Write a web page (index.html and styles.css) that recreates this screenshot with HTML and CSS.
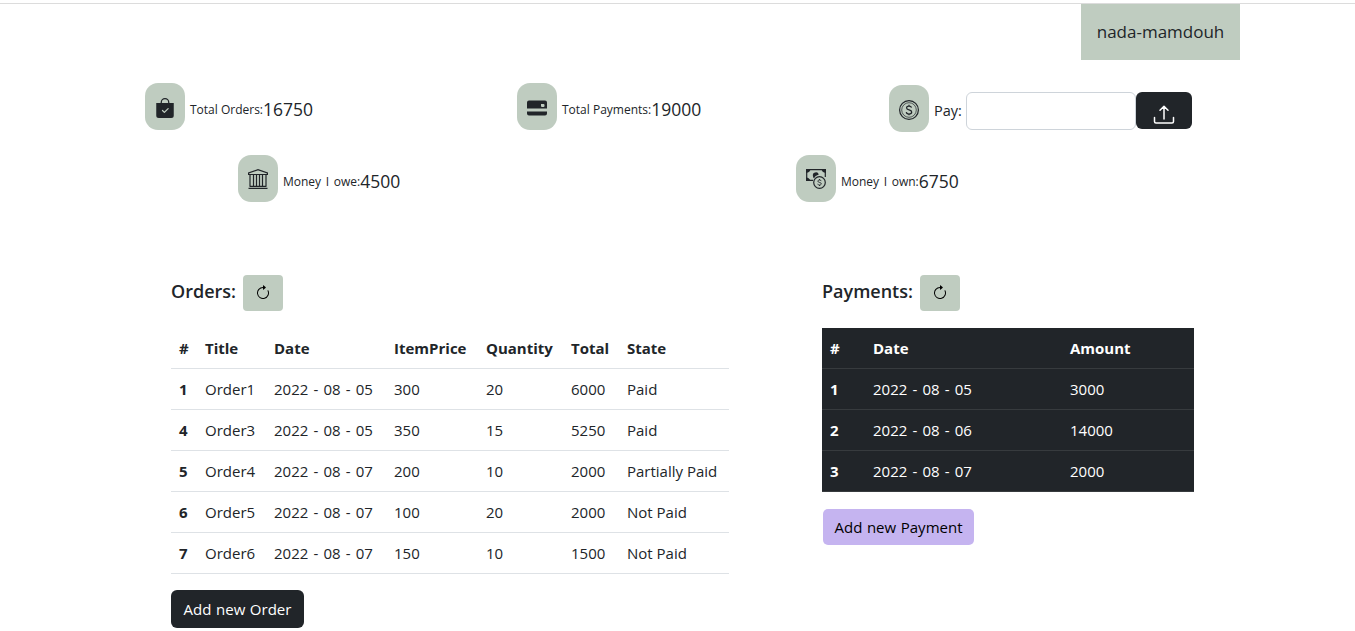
FILE: index.html
```html
<!DOCTYPE html>
<html lang="en">
<head>
<meta charset="utf-8">
<title>Orders and payments</title>
<link rel="stylesheet" href="styles.css">
</head>
<body>
<header class="topbar"><div class="user"><span class="user-name">nada-mamdouh</span></div></header>

<section class="stats stats-three">
  <div class="stat">
    <span class="badge"><svg width="20" height="20" viewBox="0 0 16 16" fill="currentColor"><path fill-rule="evenodd" d="M10.500 3.500a2.500 2.500 0 0 0-5 0V4h5v-.5zm1 0V4H15v10a2 2 0 0 1-2 2H3a2 2 0 0 1-2-2V4h3.500v-.5a3.500 3.500 0 1 1 7 0zm-.646 5.354a.5.5 0 0 0-.708-.708L7.500 10.793 6.354 9.646a.5.5 0 1 0-.708.708l1.500 1.500a.5.5 0 0 0 .708 0l3-3z"/></svg></span>
    <span class="label">Total Orders:</span><span class="amount">16750</span>
  </div>
  <div class="stat">
    <span class="badge"><svg width="20" height="20" viewBox="0 0 20 20"><path fill="currentColor" fill-rule="evenodd" d="M2 2.500H18Q20 2.500 20 4.500V10.500H0V4.500Q0 2.500 2 2.500ZM14 6V8Q14 9 15 9H16.500Q17.500 9 17.500 8V7Q17.500 6 16.500 6ZM0 13.500H20V15.500Q20 17.500 18 17.500H2Q0 17.500 0 15.500Z"/></svg></span>
    <span class="label">Total Payments:</span><span class="amount">19000</span>
  </div>
  <form class="stat stat-pay">
    <span class="badge"><svg width="20" height="20" viewBox="0 0 20 20" fill="none" stroke="currentColor"><circle cx="10" cy="10" r="9.400" stroke-width="1.200"/><circle cx="10" cy="10" r="7.300" stroke-width=".7"/><path stroke-width="1.250" d="M12.500 7.700C12.300 6.600 11.300 6 10 6 8.600 6 7.600 6.800 7.600 7.900 7.600 10.500 12.700 9.300 12.700 12 12.700 13.200 11.600 14 10 14 8.500 14 7.400 13.300 7.300 12.100M10 4.800V6M10 14V15.200"/></svg></span>
    <label class="pay-label" for="pay">Pay:</label>
    <input class="pay-input" id="pay" type="text">
    <button class="pay-button" type="button" aria-label="Send payment"><svg width="22" height="22" viewBox="0 0 22 22" fill="none" stroke="currentColor" stroke-width="1.500" stroke-linecap="round" stroke-linejoin="round"><path d="M1.500 13.500V17.500Q1.500 19 3 19H19Q20.500 19 20.500 17.500V13.500M11 15V2.500M7 6.300 11 2.300 15 6.300"/></svg></button>
  </form>
</section>

<section class="stats stats-two">
  <div class="stat">
    <span class="badge badge-raised"><svg width="20" height="20" viewBox="0 0 20 20" fill="none" stroke="currentColor" stroke-width="1.200"><path d="M.6 5.500V4L10 .7 19.400 4V5.500ZM2 5.500V17M5.500 5.500V17M8.500 5.500V17M11.500 5.500V17M14.500 5.500V17M18 5.500V17M1.500 17.300H18.500M.5 19.300H19.500"/></svg></span>
    <span class="label label-wide">Money I owe:</span><span class="amount">4500</span>
  </div>
  <div class="stat">
    <span class="badge badge-raised"><svg width="20" height="20" viewBox="0 0 20 20"><path fill="none" stroke="currentColor" stroke-width="1.200" d="M7 11.400H.7V.7H19.300V8"/><path fill="currentColor" d="M0 0H4.500Q4.300 3 1 3.800H0ZM20 0H15.500Q15.700 3 19 3.800H20ZM0 12V8.500Q3.800 8.800 4.300 12ZM7 7.200A3 3 0 0 1 12.800 5.500Q9 6.500 8 9.200 7 8.500 7 7.200Z"/><circle cx="13.500" cy="13.500" r="5.800" fill="none" stroke="currentColor" stroke-width="1.200"/><path fill="none" stroke="currentColor" stroke-width=".9" d="M15.200 12.100C15 11.300 14.400 11 13.500 11 12.600 11 11.900 11.500 11.900 12.200 11.900 13.900 15.300 13 15.300 14.800 15.300 15.600 14.500 16 13.500 16 12.500 16 11.800 15.600 11.700 14.800M13.500 10V11M13.500 16V17"/></svg></span>
    <span class="label label-wide">Money I own:</span><span class="amount">6750</span>
  </div>
</section>

<main class="panels">
  <section class="orders">
    <div class="panel-head"><h2 class="panel-title title-orders">Orders:</h2><button class="refresh" type="button" aria-label="Refresh orders"><svg width="16" height="16" viewBox="0 0 16 16" fill="currentColor"><path fill-rule="evenodd" d="M8 3a5 5 0 1 0 4.546 2.914.5.5 0 0 1 .908-.417A6 6 0 1 1 8 2v1z"/><path d="M8 4.466V.534a.25.25 0 0 1 .41-.192l2.360 1.966c.12.1.12.284 0 .384L8.410 4.658A.25.25 0 0 1 8 4.466z"/></svg></button></div>
    <table class="table orders-table">
      <colgroup><col class="o-num"><col class="o-title"><col class="o-date"><col class="o-price"><col class="o-qty"><col class="o-total"><col class="o-state"></colgroup>
      <thead><tr><th>#</th><th>Title</th><th>Date</th><th>ItemPrice</th><th>Quantity</th><th>Total</th><th>State</th></tr></thead>
      <tbody>
        <tr><th>1</th><td>Order1</td><td class="date">2022 - 08 - 05</td><td>300</td><td>20</td><td>6000</td><td>Paid</td></tr>
        <tr><th>4</th><td>Order3</td><td class="date">2022 - 08 - 05</td><td>350</td><td>15</td><td>5250</td><td>Paid</td></tr>
        <tr><th>5</th><td>Order4</td><td class="date">2022 - 08 - 07</td><td>200</td><td>10</td><td>2000</td><td>Partially Paid</td></tr>
        <tr><th>6</th><td>Order5</td><td class="date">2022 - 08 - 07</td><td>100</td><td>20</td><td>2000</td><td>Not Paid</td></tr>
        <tr><th>7</th><td>Order6</td><td class="date">2022 - 08 - 07</td><td>150</td><td>10</td><td>1500</td><td>Not Paid</td></tr>
      </tbody>
    </table>
    <button class="button button-dark" type="button">Add new Order</button>
  </section>

  <section class="payments">
    <div class="panel-head"><h2 class="panel-title title-payments">Payments:</h2><button class="refresh" type="button" aria-label="Refresh payments"><svg width="16" height="16" viewBox="0 0 16 16" fill="currentColor"><path fill-rule="evenodd" d="M8 3a5 5 0 1 0 4.546 2.914.5.5 0 0 1 .908-.417A6 6 0 1 1 8 2v1z"/><path d="M8 4.466V.534a.25.25 0 0 1 .41-.192l2.360 1.966c.12.1.12.284 0 .384L8.410 4.658A.25.25 0 0 1 8 4.466z"/></svg></button></div>
    <table class="table table-dark">
      <colgroup><col class="p-num"><col class="p-date"><col class="p-amount"></colgroup>
      <thead><tr><th>#</th><th>Date</th><th>Amount</th></tr></thead>
      <tbody>
        <tr><th>1</th><td class="date">2022 - 08 - 05</td><td>3000</td></tr>
        <tr><th>2</th><td class="date">2022 - 08 - 06</td><td>14000</td></tr>
        <tr><th>3</th><td class="date">2022 - 08 - 07</td><td>2000</td></tr>
      </tbody>
    </table>
    <button class="button button-lilac" type="button">Add new Payment</button>
  </section>
</main>
</body>
</html>
```
FILE: styles.css
```css
* { box-sizing: border-box; }
body {
  margin: 0;
  padding-top: 3px;
  height: 631px;
  overflow: hidden;
  background: #fff;
  color: #212529;
  font: 15px/24px "Open Sans", "Noto Sans", sans-serif;
}
svg { display: block; flex: none; }
button { font: inherit; cursor: pointer; }

.topbar {
  display: flex;
  justify-content: flex-end;
  height: 57px;
  padding-right: 115px;
  border-top: 1px solid #dcdcdc;
}
.user {
  display: flex;
  align-items: center;
  justify-content: center;
  width: 159px;
  background: #bfccc0;
  font-size: 17px;
}

.stats { display: grid; height: 72px; }
.stats-three {
  grid-template-columns: 372px 372px 372px;
  margin-top: 23px;
  padding-left: 145px;
}
.stats-two { grid-template-columns: 558px 558px; padding-left: 238px; }
.stat { display: flex; align-items: flex-start; height: 49px; }
.badge {
  display: flex;
  align-items: center;
  justify-content: center;
  flex: none;
  width: 40px;
  height: 47px;
  margin-right: 5px;
  padding-top: 3px;
  border-radius: 13px;
  background: #bfccc0;
}
.badge-raised { padding-top: 1px; }
.label { margin-top: 15px; font-size: 12px; white-space: nowrap; }
.label-wide { word-spacing: 1.5px; }
.amount { margin-top: 14px; font-size: 17.5px; }
.stat-pay { padding-top: 2px; }
.pay-label { width: 32px; margin-top: 14px; font-size: 14.5px; }
.pay-input {
  width: 170px;
  height: 38px;
  margin-top: 7px;
  border: 1px solid #ced4da;
  border-radius: 6px;
}
.pay-button {
  display: flex;
  justify-content: center;
  width: 56px;
  height: 37px;
  margin-top: 7px;
  padding: 12px 0 0;
  border: 0;
  border-radius: 6px;
  background: #212529;
  color: #fff;
}

.panels {
  display: grid;
  grid-template-columns: 558px 372px;
  column-gap: 93px;
  padding: 48px 0 0 171px;
}
.panel-head { display: flex; height: 53px; gap: 6px; }
.panel-title { margin: 4px 0 0; font-size: 18px; font-weight: 600; line-height: 24px; white-space: nowrap; }
.title-orders { width: 66px; }
.title-payments { width: 92px; }
.refresh {
  display: flex;
  align-items: center;
  justify-content: center;
  width: 40px;
  height: 36px;
  padding: 0;
  border: 0;
  border-radius: 4px;
  background: #bfccc0;
  color: #000;
}
.table { width: 100%; border-collapse: separate; border-spacing: 0; table-layout: fixed; }
.table th, .table td {
  height: 41px;
  padding: 8px 0 8px 8px;
  border-bottom: 1px solid #dee2e6;
  text-align: left;
  white-space: nowrap;
}
.table th { font-weight: 700; }
.table .date { word-spacing: 1.25px; }
.table-dark { background: #212529; color: #fff; }
.table-dark th, .table-dark td { border-color: #373b3e; }
.o-num { width: 26px; }
.o-title { width: 69px; }
.o-date { width: 120px; }
.o-price { width: 92px; }
.o-qty { width: 85px; }
.o-total { width: 56px; }
.o-state { width: 110px; }
.p-num { width: 43px; }
.p-date { width: 197px; }
.p-amount { width: 132px; }

.button { display: block; padding: 0; border: 0; white-space: nowrap; word-spacing: .7px; }
.button-dark {
  width: 133px;
  height: 38px;
  margin-top: 16px;
  border-radius: 6px;
  background: #212529;
  color: #fff;
}
.button-lilac {
  width: 151px;
  height: 36px;
  margin: 17px 0 0 1px;
  border-radius: 5px;
  background: #c5b4f0;
  color: #000;
}
```
